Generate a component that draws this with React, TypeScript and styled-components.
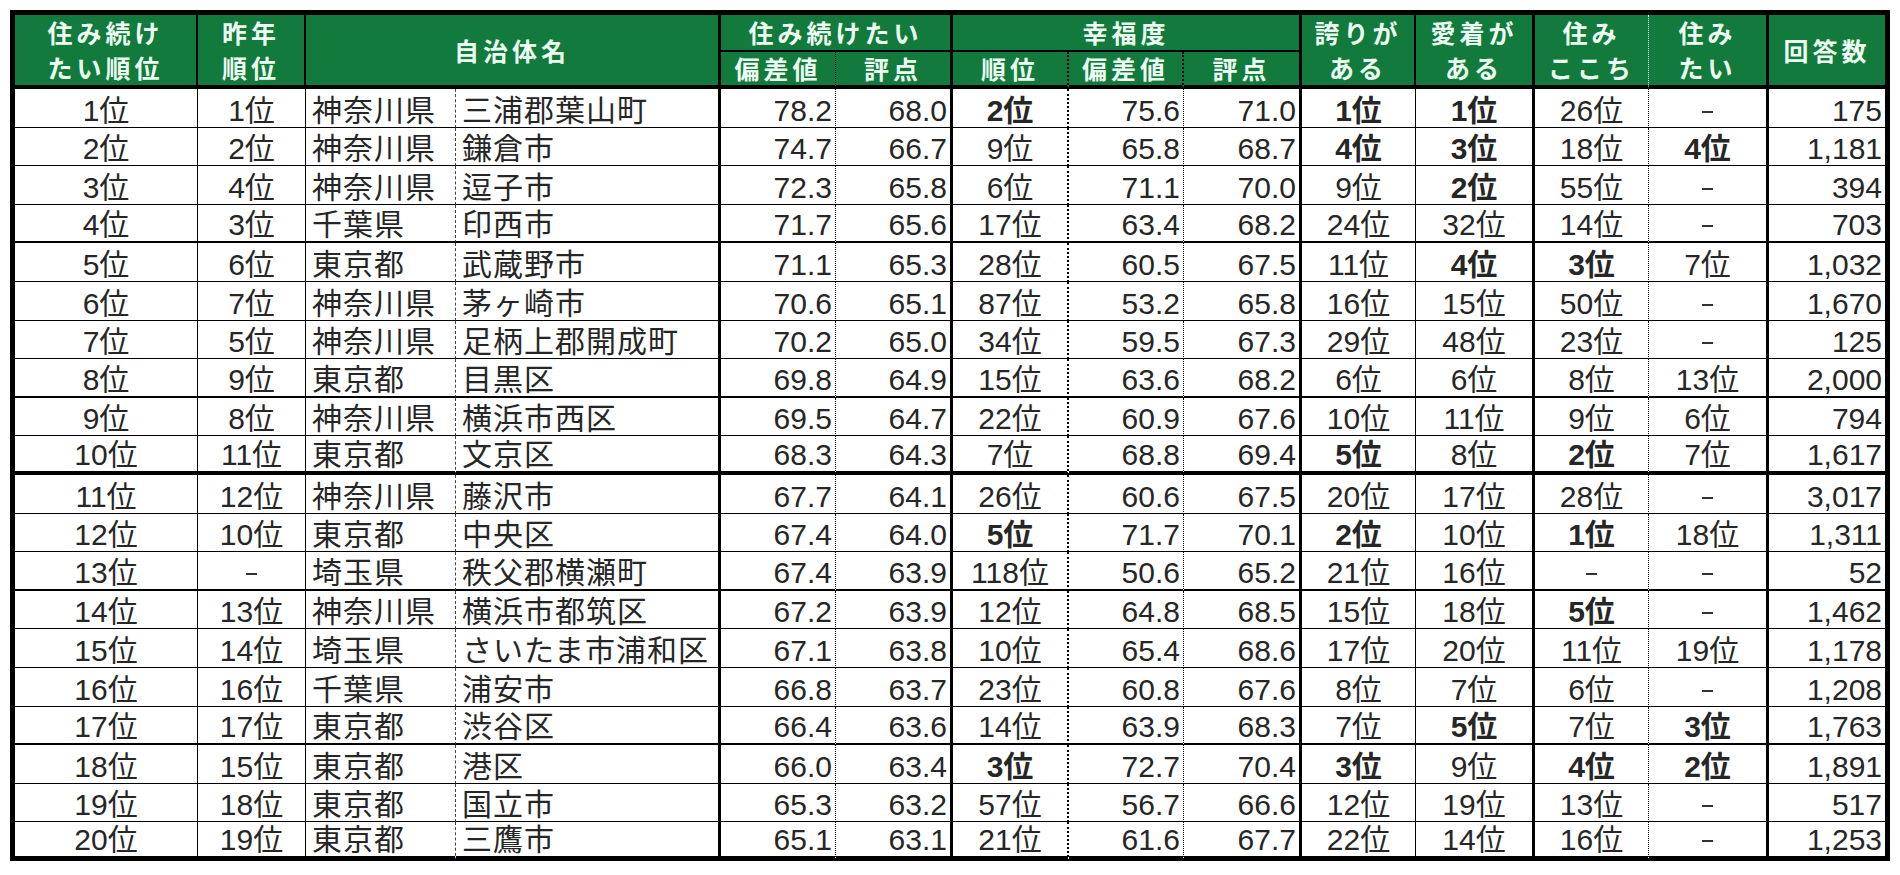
import React from "react";
import styled, { createGlobalStyle } from "styled-components";

const GlobalStyle = createGlobalStyle`
  html, body { margin: 0; padding: 0; background: #ffffff; }
  body { font-family: "Liberation Sans", "Noto Sans CJK JP", sans-serif; }
`;

const COLS = [183, 108, 150, 265, 115, 117, 116, 115, 118, 114, 119, 114, 120, 121];

const RIGHT = [
  "1px solid #000",
  "1px solid #000",
  "1px dashed #444",
  "3px solid #000",
  "1px dotted #000",
  "3px solid #000",
  "2px dotted #000",
  "1px dotted #000",
  "3px solid #000",
  "1px solid #000",
  "3px solid #000",
  "1px dotted #000",
  "3px solid #000",
  "5px solid #000",
];

const ALIGN: Array<"center" | "left" | "right"> = [
  "center", "center", "left", "left", "right", "right", "center", "right", "right",
  "center", "center", "center", "center", "right",
];

const BOLD_COLS = [6, 9, 10, 11, 12];

const Page = styled.div`
  padding: 10px;
`;

const Grid = styled.div`
  display: grid;
  grid-template-columns: ${COLS.map((c) => `${c}px`).join(" ")};
  grid-template-rows: 37px 37px repeat(20, 38.6px);
  width: 1880px;
  box-sizing: border-box;
  border-left: 5px solid #000;
  border-top: 5px solid #000;
`;

const HeadCell = styled.div<{ $col?: number; $row?: number; $right: string; $bottom: string }>`
  grid-column: span ${(p) => p.$col ?? 1};
  grid-row: span ${(p) => p.$row ?? 1};
  box-sizing: border-box;
  background: #127a3c;
  color: #ecfdf1;
  border-right: ${(p) => p.$right};
  border-bottom: ${(p) => p.$bottom};
  display: flex;
  flex-direction: column;
  align-items: center;
  justify-content: center;
  font-family: "Noto Sans CJK JP", sans-serif;
  font-weight: 700;
  font-size: 25px;
  line-height: 35px;
  letter-spacing: 4px;
  white-space: nowrap;
`;

const Cell = styled.div<{ $align: "center" | "left" | "right"; $right: string; $bottom: string; $bold: boolean; $cjk: boolean }>`
  box-sizing: border-box;
  border-right: ${(p) => p.$right};
  border-bottom: ${(p) => p.$bottom};
  display: flex;
  align-items: flex-end;
  justify-content: ${(p) => (p.$align === "left" ? "flex-start" : p.$align === "right" ? "flex-end" : "center")};
  padding: 0 ${(p) => (p.$align === "right" ? "3px" : "0")} 0 ${(p) => (p.$align === "left" ? "6px" : "0")};
  color: #262626;
  font-size: 30px;
  line-height: 32px;
  font-weight: ${(p) => (p.$bold ? 700 : 400)};
  letter-spacing: ${(p) => (p.$cjk ? "1px" : "0")};
  white-space: nowrap;
`;

const Dash = styled.span`
  display: inline-block;
  width: 11px;
  height: 2px;
  background: #333;
  margin-bottom: 14px;
`;

const DATA: string[][] = [
  ["1位", "1位", "神奈川県", "三浦郡葉山町", "78.2", "68.0", "2位", "75.6", "71.0", "1位", "1位", "26位", "-", "175"],
  ["2位", "2位", "神奈川県", "鎌倉市", "74.7", "66.7", "9位", "65.8", "68.7", "4位", "3位", "18位", "4位", "1,181"],
  ["3位", "4位", "神奈川県", "逗子市", "72.3", "65.8", "6位", "71.1", "70.0", "9位", "2位", "55位", "-", "394"],
  ["4位", "3位", "千葉県", "印西市", "71.7", "65.6", "17位", "63.4", "68.2", "24位", "32位", "14位", "-", "703"],
  ["5位", "6位", "東京都", "武蔵野市", "71.1", "65.3", "28位", "60.5", "67.5", "11位", "4位", "3位", "7位", "1,032"],
  ["6位", "7位", "神奈川県", "茅ヶ崎市", "70.6", "65.1", "87位", "53.2", "65.8", "16位", "15位", "50位", "-", "1,670"],
  ["7位", "5位", "神奈川県", "足柄上郡開成町", "70.2", "65.0", "34位", "59.5", "67.3", "29位", "48位", "23位", "-", "125"],
  ["8位", "9位", "東京都", "目黒区", "69.8", "64.9", "15位", "63.6", "68.2", "6位", "6位", "8位", "13位", "2,000"],
  ["9位", "8位", "神奈川県", "横浜市西区", "69.5", "64.7", "22位", "60.9", "67.6", "10位", "11位", "9位", "6位", "794"],
  ["10位", "11位", "東京都", "文京区", "68.3", "64.3", "7位", "68.8", "69.4", "5位", "8位", "2位", "7位", "1,617"],
  ["11位", "12位", "神奈川県", "藤沢市", "67.7", "64.1", "26位", "60.6", "67.5", "20位", "17位", "28位", "-", "3,017"],
  ["12位", "10位", "東京都", "中央区", "67.4", "64.0", "5位", "71.7", "70.1", "2位", "10位", "1位", "18位", "1,311"],
  ["13位", "-", "埼玉県", "秩父郡横瀬町", "67.4", "63.9", "118位", "50.6", "65.2", "21位", "16位", "-", "-", "52"],
  ["14位", "13位", "神奈川県", "横浜市都筑区", "67.2", "63.9", "12位", "64.8", "68.5", "15位", "18位", "5位", "-", "1,462"],
  ["15位", "14位", "埼玉県", "さいたま市浦和区", "67.1", "63.8", "10位", "65.4", "68.6", "17位", "20位", "11位", "19位", "1,178"],
  ["16位", "16位", "千葉県", "浦安市", "66.8", "63.7", "23位", "60.8", "67.6", "8位", "7位", "6位", "-", "1,208"],
  ["17位", "17位", "東京都", "渋谷区", "66.4", "63.6", "14位", "63.9", "68.3", "7位", "5位", "7位", "3位", "1,763"],
  ["18位", "15位", "東京都", "港区", "66.0", "63.4", "3位", "72.7", "70.4", "3位", "9位", "4位", "2位", "1,891"],
  ["19位", "18位", "東京都", "国立市", "65.3", "63.2", "57位", "56.7", "66.6", "12位", "19位", "13位", "-", "517"],
  ["20位", "19位", "東京都", "三鷹市", "65.1", "63.1", "21位", "61.6", "67.7", "22位", "14位", "16位", "-", "1,253"],
];

const rowBottom = (i: number): string => {
  if (i === 19) return "5px solid #000";
  if (i === 9) return "4px solid #000";
  if (i === 3 || i === 7 || i === 12 || i === 16) return "2px solid #000";
  return "1px solid #000";
};

const isBold = (col: number, v: string): boolean => {
  if (!BOLD_COLS.includes(col)) return false;
  const n = parseInt(v, 10);
  return !isNaN(n) && n <= 5;
};

const HB = "4px solid #000";
const HM = "2px solid #000";

export default function App() {
  return (
    <>
      <GlobalStyle />
      <Page>
        <Grid>
          <HeadCell $row={2} $right="2px solid #000" $bottom={HB}>
            <span>住み続け</span>
            <span>たい順位</span>
          </HeadCell>
          <HeadCell $row={2} $right="2px solid #000" $bottom={HB}>
            <span>昨年</span>
            <span>順位</span>
          </HeadCell>
          <HeadCell $col={2} $row={2} $right="3px solid #000" $bottom={HB}>
            <span>自治体名</span>
          </HeadCell>
          <HeadCell $col={2} $right="3px solid #000" $bottom={HM}>
            <span>住み続けたい</span>
          </HeadCell>
          <HeadCell $col={3} $right="3px solid #000" $bottom={HM}>
            <span>幸福度</span>
          </HeadCell>
          <HeadCell $row={2} $right="2px solid #000" $bottom={HB}>
            <span>誇りが</span>
            <span>ある</span>
          </HeadCell>
          <HeadCell $row={2} $right="3px solid #000" $bottom={HB}>
            <span>愛着が</span>
            <span>ある</span>
          </HeadCell>
          <HeadCell $row={2} $right="1px dotted #dfe" $bottom={HB}>
            <span>住み</span>
            <span>ここち</span>
          </HeadCell>
          <HeadCell $row={2} $right="3px solid #000" $bottom={HB}>
            <span>住み</span>
            <span>たい</span>
          </HeadCell>
          <HeadCell $row={2} $right="5px solid #000" $bottom={HB}>
            <span>回答数</span>
          </HeadCell>
          <HeadCell $right="1px dotted #000" $bottom={HB}>
            <span>偏差値</span>
          </HeadCell>
          <HeadCell $right="3px solid #000" $bottom={HB}>
            <span>評点</span>
          </HeadCell>
          <HeadCell $right="2px dotted #000" $bottom={HB}>
            <span>順位</span>
          </HeadCell>
          <HeadCell $right="2px dotted #000" $bottom={HB}>
            <span>偏差値</span>
          </HeadCell>
          <HeadCell $right="3px solid #000" $bottom={HB}>
            <span>評点</span>
          </HeadCell>

          {DATA.map((row, ri) =>
            row.map((v, ci) => (
              <Cell
                key={`${ri}-${ci}`}
                $align={ALIGN[ci]}
                $right={RIGHT[ci]}
                $bottom={rowBottom(ri)}
                $bold={isBold(ci, v)}
                $cjk={ci === 2 || ci === 3}
              >
                {v === "-" ? <Dash /> : v}
              </Cell>
            ))
          )}
        </Grid>
      </Page>
    </>
  );
}
